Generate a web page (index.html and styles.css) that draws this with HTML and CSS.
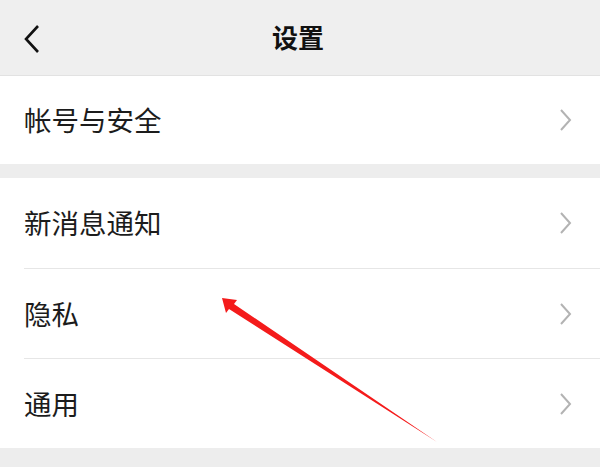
FILE: index.html
```html
<!DOCTYPE html>
<html lang="zh-CN">
<head>
<meta charset="utf-8">
<title>设置</title>
<link rel="stylesheet" href="styles.css">
</head>
<body>
<div class="page">
  <header class="topbar">
    <svg class="back" width="16" height="30" viewBox="0 0 16 30"><polyline points="14,2 2,15 14,28" fill="none" stroke="#111" stroke-width="2.6" stroke-linejoin="miter"/></svg>
    <h1 class="title">设置</h1>
  </header>
  <section class="group first">
    <div class="row"><span class="label">帐号与安全</span><svg class="chev" width="13" height="22" viewBox="0 0 13 22"><polyline points="2,1 11,11 2,21" fill="none" stroke="#b3b3b3" stroke-width="2"/></svg></div>
  </section>
  <section class="group">
    <div class="row"><span class="label">新消息通知</span><svg class="chev" width="13" height="22" viewBox="0 0 13 22"><polyline points="2,1 11,11 2,21" fill="none" stroke="#b3b3b3" stroke-width="2"/></svg></div>
    <div class="row"><span class="label">隐私</span><svg class="chev" width="13" height="22" viewBox="0 0 13 22"><polyline points="2,1 11,11 2,21" fill="none" stroke="#b3b3b3" stroke-width="2"/></svg></div>
    <div class="row"><span class="label">通用</span><svg class="chev" width="13" height="22" viewBox="0 0 13 22"><polyline points="2,1 11,11 2,21" fill="none" stroke="#b3b3b3" stroke-width="2"/></svg></div>
  </section>
  <svg class="arrow" width="600" height="467" viewBox="0 0 600 467"><polygon points="222,298 237,300 234,304 437,442 229,309 226,313" fill="#f41b1b"/></svg>
</div>
</body>
</html>
```
FILE: styles.css
```css
* { box-sizing: border-box; margin: 0; padding: 0; }
html, body { width: 600px; height: 467px; overflow: hidden; }
body {
  background: #ededed;
  font-family: "Noto Sans CJK SC", "Noto Sans", sans-serif;
  color: #1c1c1c;
}
.page { position: relative; width: 600px; height: 467px; }
.topbar {
  height: 76px;
  display: flex;
  align-items: center;
  justify-content: center;
  position: relative;
  background: #efefef;
  border-bottom: 1px solid #e2e2e2;
}
.back { position: absolute; left: 24px; top: 24px; }
.title {
  font-size: 26px;
  font-weight: 700;
  color: #111;
  line-height: 1;
  margin-left: -4px;
  margin-top: -2px;
}
.group { background: #fff; margin-top: 14px; }
.group.first { margin-top: 0; }
.row {
  height: 90px;
  margin-left: 24px;
  padding-right: 28px;
  display: flex;
  align-items: center;
  justify-content: space-between;
  border-top: 1px solid #e6e6e6;
}
.group.first .row { height: 88px; border-top: none; }
.row:first-child { border-top: none; }
.label { font-size: 27.5px; line-height: 1; letter-spacing: 0; }
.arrow { position: absolute; left: 0; top: 0; pointer-events: none; }
```
